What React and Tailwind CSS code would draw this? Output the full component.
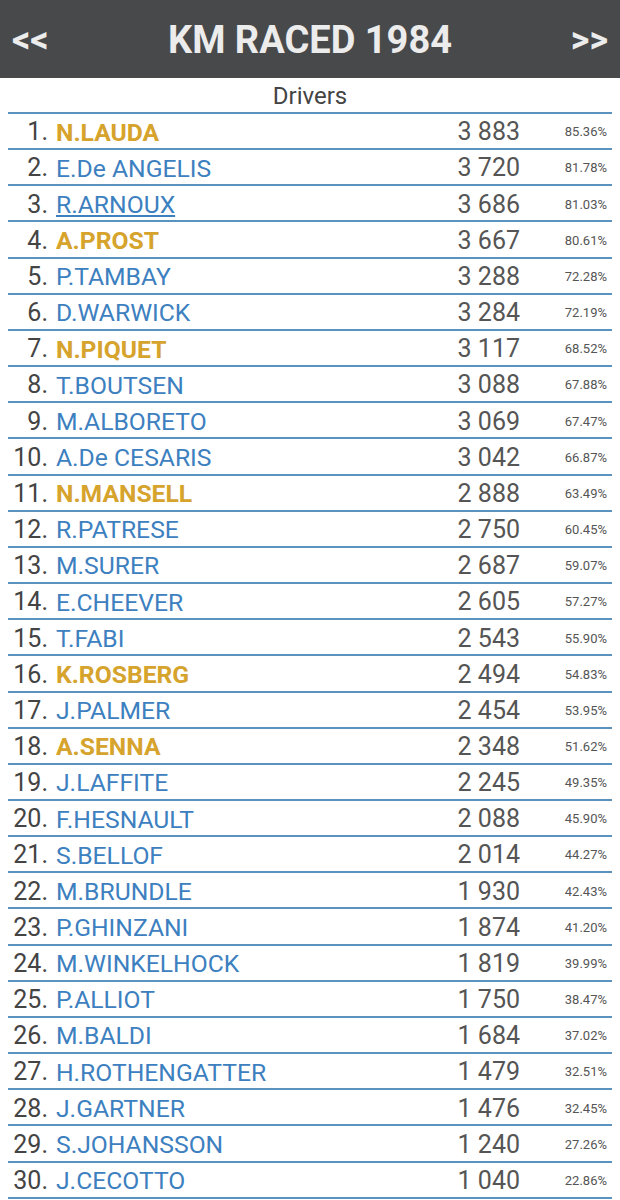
import React from 'react';

const drivers = [
    ['N.LAUDA', '3 883', '85.36%', true],
    ['E.De ANGELIS', '3 720', '81.78%'],
    ['R.ARNOUX', '3 686', '81.03%', false, true],
    ['A.PROST', '3 667', '80.61%', true],
    ['P.TAMBAY', '3 288', '72.28%'],
    ['D.WARWICK', '3 284', '72.19%'],
    ['N.PIQUET', '3 117', '68.52%', true],
    ['T.BOUTSEN', '3 088', '67.88%'],
    ['M.ALBORETO', '3 069', '67.47%'],
    ['A.De CESARIS', '3 042', '66.87%'],
    ['N.MANSELL', '2 888', '63.49%', true],
    ['R.PATRESE', '2 750', '60.45%'],
    ['M.SURER', '2 687', '59.07%'],
    ['E.CHEEVER', '2 605', '57.27%'],
    ['T.FABI', '2 543', '55.90%'],
    ['K.ROSBERG', '2 494', '54.83%', true],
    ['J.PALMER', '2 454', '53.95%'],
    ['A.SENNA', '2 348', '51.62%', true],
    ['J.LAFFITE', '2 245', '49.35%'],
    ['F.HESNAULT', '2 088', '45.90%'],
    ['S.BELLOF', '2 014', '44.27%'],
    ['M.BRUNDLE', '1 930', '42.43%'],
    ['P.GHINZANI', '1 874', '41.20%'],
    ['M.WINKELHOCK', '1 819', '39.99%'],
    ['P.ALLIOT', '1 750', '38.47%'],
    ['M.BALDI', '1 684', '37.02%'],
    ['H.ROTHENGATTER', '1 479', '32.51%'],
    ['J.GARTNER', '1 476', '32.45%'],
    ['S.JOHANSSON', '1 240', '27.26%'],
    ['J.CECOTTO', '1 040', '22.86%'],
];

const App = () => {
    return (
        <div className="w-full min-h-screen bg-white font-['Roboto',sans-serif]">
            {/* Header */}
            <div className="h-[78px] bg-[#48494b] flex items-center justify-between px-3 pt-[2px] text-[#ececec]">
                <span className="text-[36px] font-bold w-[50px]">&lt;&lt;</span>
                <h1 className="text-[38px] font-bold">KM RACED 1984</h1>
                <span className="text-[36px] font-bold w-[50px] text-right">&gt;&gt;</span>
            </div>

            <div className="mx-2">
                <div className="h-[36px] flex items-center justify-center pt-[1px] text-[24px] text-[#444] border-b-2 border-[#5a93bf]">
                    Drivers
                </div>
                {drivers.map(([name, km, pct, champ, link], i) => (
                    <div key={name} className="h-[36.17px] flex items-center pt-[2px] border-b-2 border-[#5a93bf]">
                        <span className="w-[40px] text-right text-[25px] text-[#444]">{i + 1}.</span>
                        <span
                            className={`flex-1 pl-[8px] text-[24.7px] ${champ ? 'font-bold text-[#d6a32c]' : 'text-[#3d80c0]'} ${link ? 'underline underline-offset-2' : ''}`}
                        >
                            {name}
                        </span>
                        <span className="text-[25px] text-[#555]">{km}</span>
                        <span className="w-[92px] text-right pr-[5px] text-[13px] text-[#555]">{pct}</span>
                    </div>
                ))}
            </div>
        </div>
    );
};

export default App;
